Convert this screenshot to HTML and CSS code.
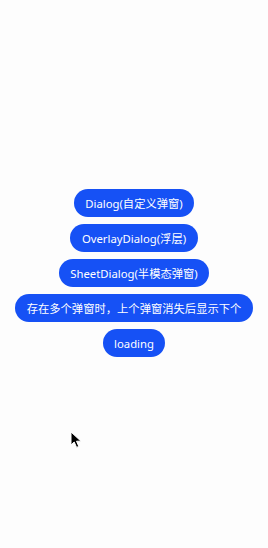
FILE: index.html
```html
<!DOCTYPE html>
<html lang="zh">
	<head>
		<meta charset="UTF-8" />
		<meta name="viewport" content="width=device-width, initial-scale=1.0" />
		<title>弹窗示例</title>
		<link rel="stylesheet" href="styles.css">
	</head>

	<body>
		<main class="list">
			<button class="btn">Dialog(自定义弹窗)</button>
			<button class="btn">OverlayDialog(浮层)</button>
			<button class="btn">SheetDialog(半模态弹窗)</button>
			<button class="btn">存在多个弹窗时，上个弹窗消失后显示下个</button>
			<button class="btn">loading</button>
		</main>

		<!-- pointeur de souris -->
		<svg class="cursor" width="14" height="18" viewBox="0 0 14 18">
			<path d="M1 1 L1 14 L4.2 11 L6.6 16.4 L8.8 15.4 L6.5 10.2 L11 10.2 Z" fill="#000" stroke="#fff" stroke-width="1" stroke-linejoin="round" />
		</svg>
	</body>
</html>
```

FILE: styles.css
```css
body {
	font-family: "Noto Sans", "Noto Sans CJK SC", sans-serif;
	margin: 0;
	padding: 0;
	background-color: #fdfdfd;
	height: 548px;
	position: relative;
}
.list {
	display: flex;
	flex-direction: column;
	align-items: center;
	gap: 7px;
	padding-top: 189px;
}
.btn {
	height: 28px;
	padding: 0 11.5px;
	border: none;
	border-radius: 14px;
	background-color: #1651f5;
	color: white;
	font-family: inherit;
	font-size: 11.3px;
	white-space: nowrap;
}
.cursor {
	position: absolute;
	left: 70px;
	top: 431px;
}
```
